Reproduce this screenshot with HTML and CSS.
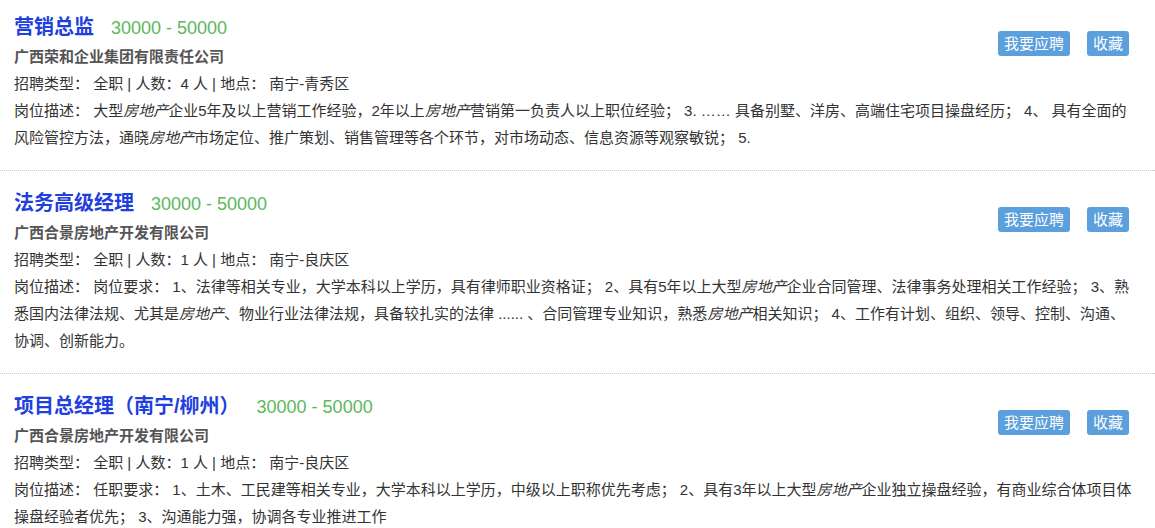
FILE: index.html
```html
<!DOCTYPE html>
<html lang="zh-CN">
  <head>
    <meta charset="UTF-8" />
    <meta name="viewport" content="width=device-width, initial-scale=1.0" />
    <title>职位列表</title>
    <link rel="stylesheet" href="styles.css">
  </head>
  <body>
    <div class="job-list">
      <div class="job">
        <div class="job-head">
          <div>
            <div class="job-title">
              <a href="#">营销总监</a>
              <span class="salary">30000 - 50000</span>
            </div>
            <div class="company">广西荣和企业集团有限责任公司</div>
          </div>
          <div class="actions">
            <button class="btn">我要应聘</button>
            <button class="btn">收藏</button>
          </div>
        </div>
        <p class="info">招聘类型： 全职 | 人数：4 人 | 地点： 南宁-青秀区</p>
        <p class="info">岗位描述： 大型<em>房地产</em>企业5年及以上营销工作经验，2年以上<em>房地产</em>营销第一负责人以上职位经验； 3. …… 具备别墅、洋房、高端住宅项目操盘经历； 4、 具有全面的风险管控方法，通晓<em>房地产</em>市场定位、推广策划、销售管理等各个环节，对市场动态、信息资源等观察敏锐； 5.</p>
      </div>

      <div class="job">
        <div class="job-head">
          <div>
            <div class="job-title">
              <a href="#">法务高级经理</a>
              <span class="salary">30000 - 50000</span>
            </div>
            <div class="company">广西合景房地产开发有限公司</div>
          </div>
          <div class="actions">
            <button class="btn">我要应聘</button>
            <button class="btn">收藏</button>
          </div>
        </div>
        <p class="info">招聘类型： 全职 | 人数：1 人 | 地点： 南宁-良庆区</p>
        <p class="info">岗位描述： 岗位要求： 1、法律等相关专业，大学本科以上学历，具有律师职业资格证； 2、具有5年以上大型<em>房地产</em>企业合同管理、法律事务处理相关工作经验； 3、熟悉国内法律法规、尤其是<em>房地产</em>、物业行业法律法规，具备较扎实的法律 ...... 、合同管理专业知识，熟悉<em>房地产</em>相关知识； 4、工作有计划、组织、领导、控制、沟通、协调、创新能力。</p>
      </div>

      <div class="job">
        <div class="job-head">
          <div>
            <div class="job-title">
              <a href="#">项目总经理（南宁/柳州）</a>
              <span class="salary">30000 - 50000</span>
            </div>
            <div class="company">广西合景房地产开发有限公司</div>
          </div>
          <div class="actions">
            <button class="btn">我要应聘</button>
            <button class="btn">收藏</button>
          </div>
        </div>
        <p class="info">招聘类型： 全职 | 人数：1 人 | 地点： 南宁-良庆区</p>
        <p class="info">岗位描述： 任职要求： 1、土木、工民建等相关专业，大学本科以上学历，中级以上职称优先考虑； 2、具有3年以上大型<em>房地产</em>企业独立操盘经验，有商业综合体项目体操盘经验者优先； 3、沟通能力强，协调各专业推进工作</p>
      </div>
    </div>
  </body>
</html>
```

FILE: styles.css
```css
body {
  margin: 0;
  background-color: #fff;
  font-family: "Liberation Sans", "Noto Sans CJK SC", sans-serif;
  font-size: 15px;
  color: #333;
}

.job {
  padding: 18px 19px 19px 14px;
  border-bottom: 1px dotted #c8c8c8;
}

.job:first-child {
  padding-top: 13px;
}

.job-head {
  display: flex;
  justify-content: space-between;
  align-items: flex-start;
}

.job-title {
  display: flex;
  align-items: baseline;
  line-height: 29px;
}

.job-title a {
  font-size: 20px;
  font-weight: bold;
  color: #1f3fde;
  text-decoration: none;
  margin-right: 17px;
}

.salary {
  font-size: 18px;
  color: #5cb85c;
}

.company {
  line-height: 27px;
  font-weight: bold;
  color: #555;
}

/* buttons on the right */
.actions {
  display: flex;
  gap: 17px;
  margin-top: 18px;
  margin-right: 7px;
}

.btn {
  font-family: inherit;
  font-size: 15px;
  line-height: 19px;
  color: #fff;
  background-color: #5b9fdc;
  border: none;
  border-radius: 3px;
  padding: 3px 6px;
  cursor: pointer;
}

.info {
  margin: 0;
  line-height: 27px;
}
```
